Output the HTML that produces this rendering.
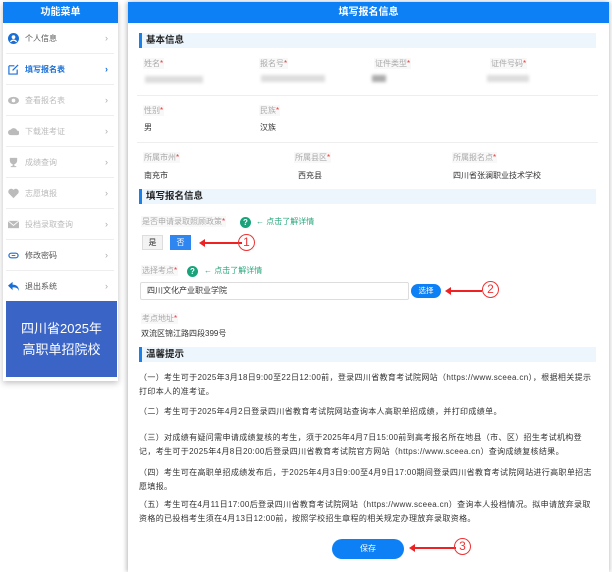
<!DOCTYPE html>
<html><head><meta charset="utf-8"><style>
*{margin:0;padding:0;box-sizing:border-box}
body{width:612px;height:562px;background:#fff;font-family:"Liberation Sans","Noto Sans CJK SC",sans-serif;position:relative;overflow:hidden;font-size:8px;color:#333}
.a{position:absolute;white-space:nowrap}
.side{position:absolute;left:3px;top:2px;width:115px;height:379px;background:#fff;box-shadow:0 2px 6px rgba(0,0,0,.25)}
.sh{height:21px;background:#0d80f5;color:#fff;font-size:10px;font-weight:bold;text-align:center;line-height:21px}
.it{position:absolute;left:6px;width:108px;height:31px;border-bottom:1px solid #eee;font-size:8px;line-height:31px;padding-left:19px;color:#555}
.it.g{color:#bbb}
.it.b{color:#1a6fd6;font-weight:bold}
.it .ic{position:absolute;left:2px;top:10px;width:11px;height:11px}
.it .ar{position:absolute;right:6px;top:0;color:#aaa;font-size:9px}
.ban{position:absolute;left:6px;top:301px;width:111px;height:76px;background:#3a64c5;color:#fff;font-size:13px;text-align:center;line-height:21px;padding-top:17px}
.main{position:absolute;left:128px;top:2px;width:481px;height:570px;background:#fff;box-shadow:-2px 0 4px rgba(0,0,0,.2),2px 0 4px rgba(0,0,0,.15)}
.tb{position:absolute;left:128px;top:2px;width:481px;height:21px;background:#0d80f5;color:#fff;font-size:10px;font-weight:bold;text-align:center;line-height:21px}
.sec{position:absolute;left:139px;width:457px;height:15px;background:#eef6fd;border-left:3px solid #1a7fe6;font-size:9.5px;font-weight:bold;line-height:15px;padding-left:4px;color:#222}
.lb{position:absolute;color:#aaa;font-size:8px;white-space:nowrap;background:#f8f8f8;padding:0 1px}
.lb i{color:#e33;font-style:normal}
.v{position:absolute;font-size:8px;color:#333;white-space:nowrap}
.blur{position:absolute;height:7px;background:#ddd;filter:blur(1.5px)}
.hr{position:absolute;left:137px;width:461px;height:1px;background:#eee}
.q{position:absolute;width:11px;height:11px;border-radius:50%;background:#1aa37a;color:#fff;font-size:8px;font-weight:bold;text-align:center;line-height:11px}
.gl{position:absolute;color:#2aa77e;font-size:8px;white-space:nowrap}
.p{position:absolute;left:139px;width:458px;font-size:8px;line-height:14px;color:#333;letter-spacing:0.35px}
.num{position:absolute;width:17px;height:17px;border:1px solid #e33;border-radius:50%;color:#e33;font-size:12px;text-align:center;line-height:15px}
.arr{position:absolute;height:2px;background:#e22}
.arr:before{content:"";position:absolute;left:-5px;top:-3px;border-right:6px solid #e22;border-top:4px solid transparent;border-bottom:4px solid transparent}
</style></head><body>
<div class="side"><div class="sh">功能菜单</div></div>
<div class="it" style="top:23px"><svg class="ic" viewBox="0 0 12 12"><circle cx="6" cy="6" r="6" fill="#1a6fd6"/><circle cx="6" cy="4.5" r="2" fill="#fff"/><path d="M2.5 9.5Q6 6 9.5 9.5" stroke="#fff" stroke-width="1.5" fill="none"/></svg>个人信息<span class="ar">›</span></div>
<div class="it b" style="top:54px"><svg class="ic" viewBox="0 0 12 12"><path d="M1 2h6M1 2v9h9V6" stroke="#1a6fd6" stroke-width="1.3" fill="none"/><path d="M5 7l6-6" stroke="#1a6fd6" stroke-width="1.3"/></svg>填写报名表<span class="ar" style="color:#1a6fd6">›</span></div>
<div class="it g" style="top:85px"><svg class="ic" viewBox="0 0 12 12"><ellipse cx="6" cy="6" rx="6" ry="4" fill="#bbb"/><circle cx="6" cy="6" r="2" fill="#fff"/></svg>查看报名表<span class="ar">›</span></div>
<div class="it g" style="top:116px"><svg class="ic" viewBox="0 0 12 12"><path d="M3 10a3 3 0 010-6 4 4 0 017 1 2.5 2.5 0 010 5z" fill="#bbb"/></svg>下载准考证<span class="ar">›</span></div>
<div class="it g" style="top:147px"><svg class="ic" viewBox="0 0 12 12"><path d="M2 1h8v3a4 4 0 01-8 0z M5 8h2v2h2v1H3v-1h2z" fill="#bbb"/></svg>成绩查询<span class="ar">›</span></div>
<div class="it g" style="top:178px"><svg class="ic" viewBox="0 0 12 12"><path d="M6 11L1 6a3 3 0 015-4 3 3 0 015 4z" fill="#bbb"/></svg>志愿填报<span class="ar">›</span></div>
<div class="it g" style="top:209px"><svg class="ic" viewBox="0 0 12 12"><rect x="0" y="2" width="12" height="8" fill="#bbb"/><path d="M0 2l6 5 6-5" stroke="#fff" fill="none"/></svg>投档录取查询<span class="ar">›</span></div>
<div class="it" style="top:240px"><svg class="ic" viewBox="0 0 12 12"><rect x="1" y="3.5" width="10" height="5" rx="2.5" stroke="#1a6fd6" stroke-width="1.3" fill="none"/><path d="M4 6h4" stroke="#1a6fd6"/></svg>修改密码<span class="ar">›</span></div>
<div class="it" style="top:271px;border:none"><svg class="ic" viewBox="0 0 12 12"><path d="M0 5l5-4v3c4 0 7 2 7 7-1-3-3-4-7-4v3z" fill="#1a6fd6"/></svg>退出系统<span class="ar">›</span></div>
<div class="ban">四川省2025年<br>高职单招院校</div>

<div class="main"></div>
<div class="tb">填写报名信息</div>
<div class="sec" style="top:33px">基本信息</div>
<div class="lb" style="left:143px;top:58px">姓名<i>*</i></div>
<div class="lb" style="left:259px;top:58px">报名号<i>*</i></div>
<div class="lb" style="left:374px;top:58px">证件类型<i>*</i></div>
<div class="lb" style="left:490px;top:58px">证件号码<i>*</i></div>
<div class="blur" style="left:145px;top:76px;width:58px"></div>
<div class="blur" style="left:261px;top:75px;width:64px"></div>
<div class="blur" style="left:372px;top:75px;width:14px;background:#aaa"></div>
<div class="blur" style="left:487px;top:75px;width:42px"></div>
<div class="hr" style="top:95px"></div>
<div class="lb" style="left:143px;top:105px">性别<i>*</i></div>
<div class="lb" style="left:259px;top:105px">民族<i>*</i></div>
<div class="v" style="left:144px;top:122px">男</div>
<div class="v" style="left:260px;top:122px">汉族</div>
<div class="hr" style="top:142px"></div>
<div class="lb" style="left:143px;top:152px">所属市州<i>*</i></div>
<div class="lb" style="left:294px;top:152px">所属县区<i>*</i></div>
<div class="lb" style="left:452px;top:152px">所属报名点<i>*</i></div>
<div class="v" style="left:144px;top:170px">南充市</div>
<div class="v" style="left:298px;top:170px">西充县</div>
<div class="v" style="left:453px;top:170px">四川省张澜职业技术学校</div>

<div class="sec" style="top:189px">填写报名信息</div>
<div class="lb" style="left:141px;top:216px">是否申请录取照顾政策<i>*</i></div>
<div class="q" style="left:240px;top:217px">?</div>
<div class="gl" style="left:256px;top:216px">← 点击了解详情</div>
<div class="a" style="left:142px;top:235px;width:21px;height:15px;background:#f3f3f3;border:1px solid #ddd;text-align:center;line-height:13px">是</div>
<div class="a" style="left:170px;top:235px;width:21px;height:15px;background:#2f86f0;color:#fff;text-align:center;line-height:15px">否</div>
<div class="arr" style="left:204px;top:242px;width:38px"></div>
<div class="num" style="left:238px;top:234px">1</div>
<div class="lb" style="left:141px;top:265px">选择考点<i>*</i></div>
<div class="q" style="left:187px;top:266px">?</div>
<div class="gl" style="left:204px;top:265px">← 点击了解详情</div>
<div class="a" style="left:140px;top:282px;width:269px;height:18px;border:1px solid #ddd;border-radius:2px;line-height:16px;padding-left:6px">四川文化产业职业学院</div>
<div class="a" style="left:411px;top:284px;width:30px;height:14px;background:#0d80f5;border-radius:7px;color:#fff;text-align:center;line-height:14px;font-size:7.5px">选择</div>
<div class="arr" style="left:450px;top:290px;width:32px"></div>
<div class="num" style="left:482px;top:281px">2</div>
<div class="lb" style="left:141px;top:313px">考点地址<i>*</i></div>
<div class="v" style="left:141px;top:328px">双流区锦江路四段399号</div>

<div class="sec" style="top:347px">温馨提示</div>
<div class="p" style="top:371px">（一）考生可于2025年3月18日9:00至22日12:00前，登录四川省教育考试院网站（https://www.sceea.cn），根据相关提示打印本人的准考证。</div>
<div class="p" style="top:405px">（二）考生可于2025年4月2日登录四川省教育考试院网站查询本人高职单招成绩，并打印成绩单。</div>
<div class="p" style="top:431px">（三）对成绩有疑问需申请成绩复核的考生，须于2025年4月7日15:00前到高考报名所在地县（市、区）招生考试机构登记，考生可于2025年4月8日20:00后登录四川省教育考试院官方网站（https://www.sceea.cn）查询成绩复核结果。</div>
<div class="p" style="top:466px">（四）考生可在高职单招成绩发布后，于2025年4月3日9:00至4月9日17:00期间登录四川省教育考试院网站进行高职单招志愿填报。</div>
<div class="p" style="top:498px">（五）考生可在4月11日17:00后登录四川省教育考试院网站（https://www.sceea.cn）查询本人投档情况。拟申请放弃录取资格的已投档考生须在4月13日12:00前，按照学校招生章程的相关规定办理放弃录取资格。</div>
<div class="a" style="left:332px;top:539px;width:72px;height:20px;background:#0d80f5;border-radius:10px;color:#fff;text-align:center;line-height:20px">保存</div>
<div class="arr" style="left:414px;top:547px;width:42px"></div>
<div class="num" style="left:454px;top:538px">3</div>
</body></html>
